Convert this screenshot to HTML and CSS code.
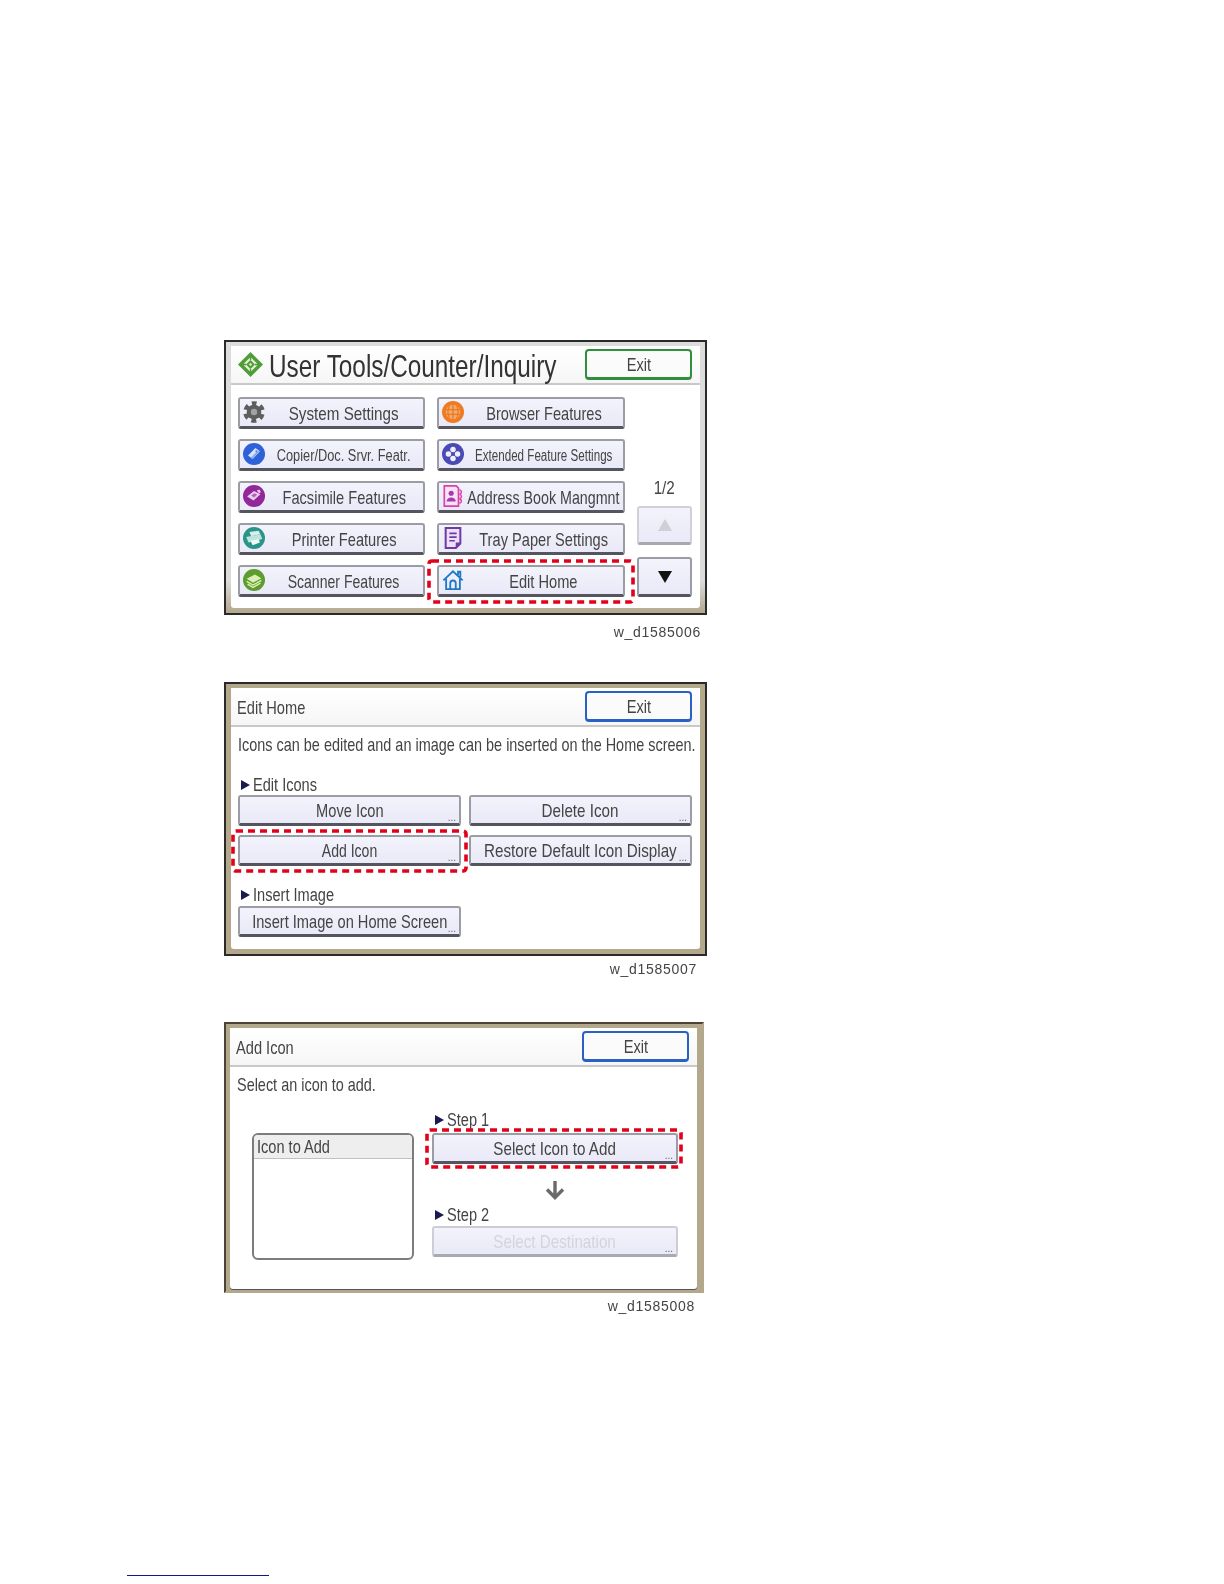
FILE: index.html
```html
<!DOCTYPE html>
<html lang="en">
<head>
<meta charset="utf-8">
<title>User Tools</title>
<link rel="stylesheet" href="styles.css">
</head>
<body>
<main class="page">

<figure class="fig fig-a">
  <div class="panel panel-top">
    <div class="screen">
      <header class="head">
        <svg class="logo" viewBox="0 0 28 28" aria-hidden="true">
          <path d="M14 0 28 14 14 28 0 14Z" fill="#4f9c38"/>
          <path d="M14 5.500 22.500 14 14 22.500 5.500 14Z" fill="#e4f2d6"/>
          <path d="M14 9 19 14 14 19 9 14Z" fill="#4f9c38"/>
          <path d="M14 12 16 14 14 16 12 14Z" fill="#cfe6bb"/>
          <path d="M14 5v4M14 19v4M5 14h4M19 14h4" stroke="#4f9c38" stroke-width="1.500"/>
        </svg>
        <div class="title"><h1 class="title-text">User Tools/Counter/Inquiry</h1></div>
        <button class="exit exit-green"><span class="n">Exit</span></button>
      </header>
      <div class="menu">
        <div class="menu-grid">
          <div class="btn btn-icon">
            <svg class="ico" viewBox="0 0 24 24"><circle cx="12" cy="12" r="8" fill="#5e5e5e"/><circle cx="12" cy="12" r="9.300" fill="none" stroke="#5e5e5e" stroke-width="5" stroke-dasharray="5.300 4.440" stroke-dashoffset="2.650" transform="rotate(-90 12 12)"/><circle cx="12" cy="12" r="3.500" fill="#a2a2a2"/></svg>
            <span class="lbl"><span class="n n-80">System Settings</span></span>
          </div>
          <div class="btn btn-icon">
            <svg class="ico" viewBox="0 0 24 24"><circle cx="12" cy="12" r="12" fill="#ee7a22"/><circle cx="12" cy="12" r="8" fill="#f8a866"/><path d="M4.500 9.500h15M4.500 14.500h15M12 4v16M8 5c-2 4.500-2 9.500 0 14M16 5c2 4.500 2 9.500 0 14" stroke="#e2711c" stroke-width="1.100" fill="none"/></svg>
            <span class="lbl"><span class="n">Browser Features</span></span>
          </div>
          <div class="btn btn-icon">
            <svg class="ico" viewBox="0 0 24 24"><circle cx="12" cy="12" r="12" fill="#2f62d8"/><path d="M5.500 13.500 13.500 5.500l5 3.500-8 8.500z" fill="#d6e4fb"/><path d="M8.500 16 16.500 8l1.500 1-8 8.500z" fill="#86a9ec"/><circle cx="14.500" cy="9" r="1" fill="#4f7fe0"/></svg>
            <span class="lbl"><span class="n n-tight">Copier/Doc. Srvr. Featr.</span></span>
          </div>
          <div class="btn btn-icon">
            <svg class="ico" viewBox="0 0 24 24"><circle cx="12" cy="12" r="12" fill="#4a4ab4"/><circle cx="12" cy="7" r="3" fill="#eeeefb"/><circle cx="12" cy="17" r="3" fill="#eeeefb"/><circle cx="7" cy="12" r="3" fill="#eeeefb"/><circle cx="17" cy="12" r="3" fill="#eeeefb"/></svg>
            <span class="lbl"><span class="n n-ext">Extended Feature Settings</span></span>
          </div>
          <div class="btn btn-icon">
            <svg class="ico" viewBox="0 0 24 24"><circle cx="12" cy="12" r="12" fill="#92279a"/><path d="M4.500 12.500 12 6.500l7 3.500-7.500 7z" fill="#eccbee"/><path d="M9 11.500l3.500-2.500 3 1.500-3.500 3z" fill="#b064b8"/><path d="M15 6l3-1 1.500 3-2 1z" fill="#eccbee"/></svg>
            <span class="lbl"><span class="n">Facsimile Features</span></span>
          </div>
          <div class="btn btn-icon">
            <svg class="ico" viewBox="0 0 24 24"><path d="M2.500 1h13l2.500 2.500V23h-15.500z" fill="#f8e2f3" stroke="#dc40aa" stroke-width="1.800"/><circle cx="10" cy="9" r="2.800" fill="#a43cae"/><path d="M5 18c0-6 10-6 10 0z" fill="#a43cae"/><path d="M19 5c3 1 3 4 0 5M19 10c3 1 3 4 0 5M19 15c3 1 3 4 0 5" fill="none" stroke="#dc40aa" stroke-width="1.600"/></svg>
            <span class="lbl"><span class="n n-fit">Address Book Mangmnt</span></span>
          </div>
          <div class="btn btn-icon">
            <svg class="ico" viewBox="0 0 24 24"><circle cx="12" cy="12" r="12" fill="#2b9488"/><path d="M7 5.500 17 4l2 4-10 2z" fill="#d6efea"/><path d="M3.500 11 19 8l2 5-15 4z" fill="#bfe4dd"/><path d="M8 15l9-2 1.500 4-8 3z" fill="#eef9f7"/></svg>
            <span class="lbl"><span class="n">Printer Features</span></span>
          </div>
          <div class="btn btn-icon">
            <svg class="ico" viewBox="0 0 24 24"><path d="M4 1h16v17l-5 5H4z" fill="#ece0f8" stroke="#6e3aa6" stroke-width="2.200"/><path d="M8 7h8M8 11h8M8 15h6" stroke="#6e3aa6" stroke-width="1.800"/><path d="M15 22v-5h5z" fill="#6e3aa6"/></svg>
            <span class="lbl"><span class="n">Tray Paper Settings</span></span>
          </div>
          <div class="btn btn-icon">
            <svg class="ico" viewBox="0 0 24 24"><circle cx="12" cy="12" r="12" fill="#5f9c2e"/><path d="M4 10.500 13 6l7 4-9 5z" fill="#dcefb9"/><path d="M4 13.500l7 4 9-5M5 16.500l6 3.500 8-4.500" stroke="#dcefb9" stroke-width="1.500" fill="none"/></svg>
            <span class="lbl"><span class="n n-small">Scanner Features</span></span>
          </div>
          <div class="btn btn-icon btn-marked">
            <svg class="ico" viewBox="0 0 24 24"><path d="M1.500 12.500 12 2.500l10.500 10M4.500 10.500V22h15V10.500M17.500 6.500V3h2.500v6" fill="none" stroke="#1f78c8" stroke-width="2"/><path d="M9 22v-6.500a3 3 0 0 1 6 0V22" fill="none" stroke="#1f78c8" stroke-width="2"/></svg>
            <span class="lbl"><span class="n">Edit Home</span></span>
            <svg class="dash dash-home" width="208" height="45" aria-hidden="true"><rect x="2" y="2" width="204" height="41" rx="3" class="dash-line"/></svg>
          </div>
        </div>
        <aside class="pager">
          <span class="pager-num"><span class="n n-80">1/2</span></span>
          <button class="page-btn page-up"><span class="tri tri-up"></span></button>
          <button class="page-btn"><span class="tri tri-down"></span></button>
        </aside>
      </div>
    </div>
  </div>
  <figcaption class="cap cap-a">w_d1585006</figcaption>
</figure>

<figure class="fig fig-b">
  <div class="panel">
    <div class="screen">
      <header class="head head-small">
        <div class="sub"><h2 class="sub-text">Edit Home</h2></div>
        <button class="exit exit-blue"><span class="n">Exit</span></button>
      </header>
      <div class="edit">
        <p class="intro"><span class="nl nl-76">Icons can be edited and an image can be inserted on the Home screen.</span></p>
        <div class="sect sect-icons"><span class="tri tri-right"></span><span class="nl">Edit Icons</span></div>
        <div class="edit-grid">
          <div class="btn btn-more"><span class="n">Move Icon</span><span class="more">...</span></div>
          <div class="btn btn-more"><span class="n n-80">Delete Icon</span><span class="more">...</span></div>
          <div class="btn btn-more btn-marked"><span class="n n-small">Add Icon</span><span class="more">...</span>
            <svg class="dash dash-add" width="237" height="44" aria-hidden="true"><rect x="2" y="2" width="233" height="40" rx="3" class="dash-line"/></svg>
          </div>
          <div class="btn btn-more"><span class="n n-80">Restore Default Icon Display</span><span class="more">...</span></div>
        </div>
        <div class="sect sect-image"><span class="tri tri-right"></span><span class="nl">Insert Image</span></div>
        <div class="edit-grid">
          <div class="btn btn-more"><span class="n">Insert Image on Home Screen</span><span class="more">...</span></div>
        </div>
      </div>
    </div>
  </div>
  <figcaption class="cap cap-b">w_d1585007</figcaption>
</figure>

<figure class="fig fig-c">
  <div class="panel panel-c">
    <div class="screen">
      <header class="head head-small">
        <div class="sub"><h2 class="sub-text">Add Icon</h2></div>
        <button class="exit exit-blue"><span class="n">Exit</span></button>
      </header>
      <div class="add">
        <p class="intro"><span class="nl nl-76">Select an icon to add.</span></p>
        <div class="add-cols">
          <div class="list">
            <div class="list-head"><span class="nl">Icon to Add</span></div>
          </div>
          <div class="steps">
            <div class="sect sect-first"><span class="tri tri-right"></span><span class="nl">Step 1</span></div>
            <div class="btn btn-more btn-marked"><span class="n n-80">Select Icon to Add</span><span class="more">...</span>
              <svg class="dash dash-select" width="258" height="41" aria-hidden="true"><rect x="2" y="2" width="254" height="37" rx="3" class="dash-line"/></svg>
            </div>
            <svg class="arrow" viewBox="0 0 22 20" aria-hidden="true"><path d="M11 1v16M3 9.500l8 8 8-8" fill="none" stroke="#6a6a6a" stroke-width="3.400"/></svg>
            <div class="sect sect-second"><span class="tri tri-right"></span><span class="nl">Step 2</span></div>
            <div class="btn btn-more btn-off"><span class="n n-80">Select Destination</span><span class="more">...</span></div>
          </div>
        </div>
      </div>
    </div>
  </div>
  <figcaption class="cap cap-c">w_d1585008</figcaption>
</figure>

<div class="rule"></div>
</main>
</body>
</html>
```

FILE: styles.css
```css
* { box-sizing: border-box; }
html, body { margin: 0; padding: 0; background: #fff; }
body { width: 1224px; height: 1584px; overflow: hidden; font-family: "Liberation Sans", sans-serif; color: #444; }
.page { padding: 340px 0 0 224px; position: relative; height: 100%; }
.fig { margin: 0; width: 483px; }
.fig-b { margin-top: 42px; }
.fig-c { margin-top: 45px; width: 480px; }

.panel { height: 274px; border: 2px solid #2a2a28; background: #b3a78c; padding: 4px 5px 5px; filter: blur(.4px); }
.panel-top { height: 275px; background: linear-gradient(#dcdcdc 0 88%, #b3a78c 100%); }
.panel-c { height: 271px; padding: 4px 5px 2px 4px; border-color: #4a4436 #b3a78c #b3a78c #4a4436; }
.panel-c .screen { box-shadow: 0 1px 0 #555; }
.screen { height: 100%; background: #fff; border-radius: 3px; display: flex; flex-direction: column; }

.n, .nl { display: inline-block; white-space: nowrap; flex: none; transform: scaleX(.77); }
.n { transform-origin: center; }
.nl { transform-origin: left center; transform: scaleX(.81); }
.n-80 { transform: scaleX(.8); }
.n-small { transform: scaleX(.74); }
.n-tight { font-size: 16px; transform: scaleX(.8); }
.n-ext { font-size: 16px; transform: scaleX(.725); }
.n-fit { transform: scaleX(.75); }
.nl-76 { transform: scaleX(.76); }

.head { height: 39px; flex: none; display: flex; align-items: center; padding: 0 8px 0 7px; border-bottom: 2px solid #c9c9c9; background: linear-gradient(#fff, #f6f6f6); }
.head-small { padding-left: 6px; }
.logo { width: 25px; height: 25px; flex: none; margin-right: 6px; }
.title, .sub { flex: 1; min-width: 0; display: flex; }
.title { padding-top: 3px; }
.sub { padding-top: 2px; }
.title-text { margin: 0; flex: none; font-size: 32px; font-weight: 400; color: #333; white-space: nowrap; transform: scaleX(.76); transform-origin: left center; }
.sub-text { margin: 0; flex: none; font-size: 19px; font-weight: 400; color: #444; white-space: nowrap; transform: scaleX(.77); transform-origin: left center; }
.exit { width: 107px; height: 31px; flex: none; padding: 1px 0 0; background: #fbfbfb; border: 2px solid; border-bottom-width: 3px; border-radius: 4px; font: 19px "Liberation Sans", sans-serif; color: #444; }
.exit-green { border-color: #2f8f3a; }
.exit-blue { border-color: #2a62c4; }

.menu { display: flex; padding: 12px 8px 0 7px; gap: 12px; }
.menu-grid { display: grid; grid-template-columns: 187px 188px; grid-auto-rows: 32px; gap: 10px 12px; }
.btn { position: relative; display: flex; align-items: center; justify-content: center; min-width: 0; padding-top: 1px; background: linear-gradient(#f3f3fc, #e9e9f8); border: 2px solid #9c9ca4; border-bottom: 3px solid #54555d; border-radius: 3px; font-size: 19px; color: #444; white-space: nowrap; }
.btn-icon { padding-left: 3px; padding-top: 2px; }
.ico { width: 22px; height: 22px; flex: none; margin-top: -3px; }
.lbl { flex: 1; min-width: 0; display: flex; justify-content: center; }
.dash { position: absolute; pointer-events: none; overflow: visible; }
.dash-line { fill: none; stroke: #e2001a; stroke-width: 3.600; stroke-dasharray: 7 5; }
.dash-home { left: -12px; top: -8px; }
.dash-add { left: -9px; top: -8px; }
.dash-select { left: -9px; top: -7px; }

.pager { width: 55px; height: 200px; display: flex; flex-direction: column; align-items: center; justify-content: flex-end; }
.pager-num { font-size: 19px; line-height: 22px; margin-bottom: 7px; color: #444; }
.page-btn { width: 55px; height: 40px; padding: 0; display: flex; align-items: center; justify-content: center; background: linear-gradient(#f3f3fc, #e9e9f8); border: 2px solid #9c9ca4; border-bottom: 3px solid #54555d; border-radius: 3px; }
.page-up { height: 39px; margin-bottom: 12px; border-color: #d0d0d8; border-bottom-color: #a8a8b0; }
.tri { display: inline-block; width: 0; height: 0; flex: none; border-style: solid; }
.tri-up { border-width: 0 7px 12px; border-color: transparent transparent #cfcfd5; }
.tri-down { border-width: 12px 7px 0; border-color: #111 transparent transparent; }
.tri-right { border-width: 5px 0 5px 9px; border-color: transparent transparent transparent #1a1a4e; margin-right: 3px; }

.edit { padding: 7px 7px 0; display: flex; flex-direction: column; }
.add { padding: 7px 0 0 7px; display: flex; flex-direction: column; }
.intro { margin: 0; height: 22px; line-height: 22px; font-size: 19px; white-space: nowrap; color: #444; }
.sect { display: flex; align-items: center; height: 18px; font-size: 18px; color: #444; padding-left: 3px; }
.sect-icons { margin-top: 20px; margin-bottom: 1px; }
.sect-image { margin-top: 20px; margin-bottom: 2px; }
.sect-first { margin-bottom: 4px; }
.sect-second { margin-bottom: 2px; }
.edit-grid { display: grid; grid-template-columns: 223px 223px; grid-auto-rows: 31px; gap: 9px 8px; }
.more { position: absolute; right: 3px; bottom: 2px; font: 10px/6px "Liberation Sans", sans-serif; color: #666; }
.btn-marked { z-index: 1; }

.add-cols { display: flex; }
.list { width: 162px; height: 127px; margin: 37px 0 0 15px; border: 2px solid #7c7c7c; border-radius: 6px; overflow: hidden; }
.list-head { height: 24px; line-height: 24px; padding-left: 3px; font-size: 18px; background: #eee; border-bottom: 1px solid #c0c0c0; }
.steps { width: 246px; margin-left: 18px; margin-top: 15px; display: flex; flex-direction: column; }
.steps > .btn { height: 31px; flex: none; }
.arrow { width: 22px; height: 20px; flex: none; align-self: center; margin: 16px 0 6px; }
.btn-off { color: #d4d4de; border-color: #cdcdd5; border-bottom-color: #a9a9b0; }

.cap { font: 14px "Liberation Sans", sans-serif; color: #444; text-align: right; margin-top: 9px; line-height: 16px; letter-spacing: .7px; filter: blur(.3px); }
.cap-a { padding-right: 6px; }
.cap-b { padding-right: 10px; margin-top: 5px; }
.cap-c { padding-right: 9px; margin-top: 5px; }

.rule { position: absolute; left: 127px; top: 1575px; width: 142px; height: 1px; background: #14148c; }
```
